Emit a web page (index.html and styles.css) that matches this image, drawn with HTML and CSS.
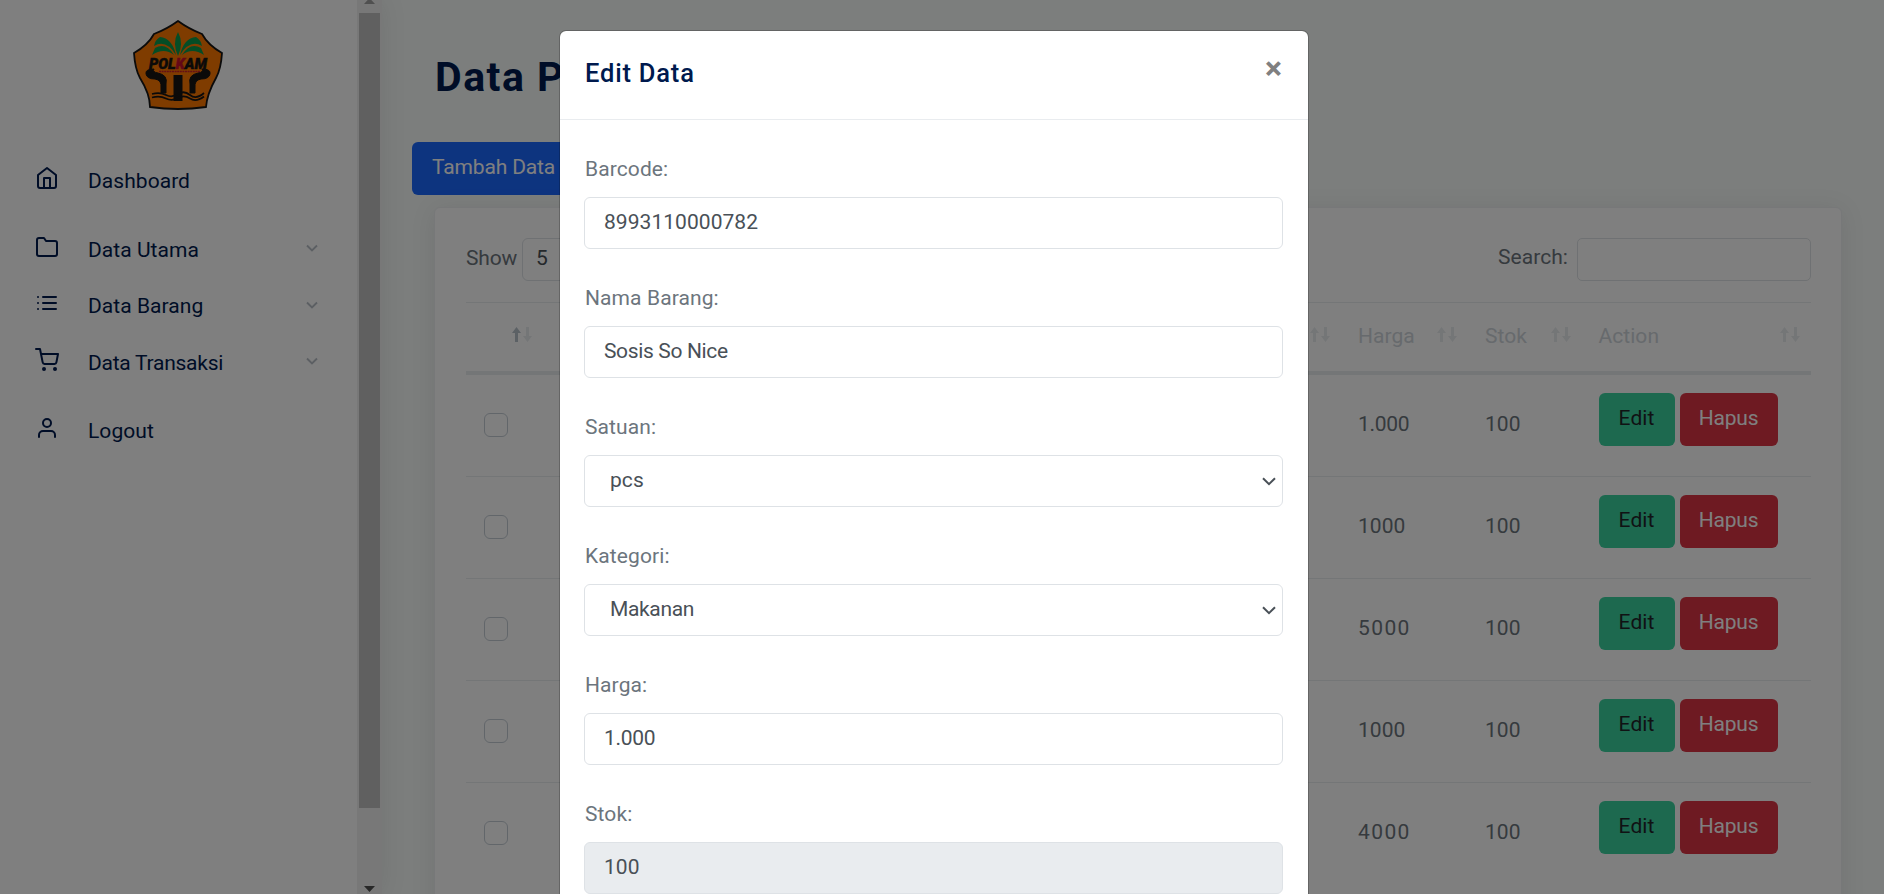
FILE: index.html
```html
<!DOCTYPE html>
<html lang="id">
<head>
<meta charset="utf-8">
<title>Data Produk</title>
<link rel="stylesheet" href="styles.css">
</head>
<body>
<svg class="defs" width="0" height="0">
  <symbol id="chev" viewBox="0 0 24 24"><polyline points="6 9 12 15 18 9"/></symbol>
  <symbol id="sort" viewBox="0 0 20 15">
    <path class="up" d="M4.500 0L9 6H6V15H3V6H0Z"/>
    <path class="down" fill="#e9ecef" d="M15.500 15L20 9H17V0H14V9H11Z"/>
  </symbol>
</svg>
<div class="app">
  <aside class="sidebar">
    <div class="side-main">
      <svg class="logo" viewBox="0 0 120 110">
        <path d="M58 11Q69 19 82 24Q88 35 102 43Q101 59 96 68Q87 84 86 97Q58 101 30 97Q30 84 20 68Q15 59 14 43Q28 35 34 24Q47 19 58 11Z" fill="#ff7800" stroke="#161616" stroke-width="1.800"/>
        <g fill="#0a9a4c">
          <path d="M58 22Q64 33 58 46Q52 33 58 22Z"/>
          <path d="M56 45Q52 28 40 27Q35 30 34 36Q46 29 56 45Z"/>
          <path d="M54 45Q46 32 35 38L32 45Q44 37 54 45Z"/>
          <path d="M60 45Q64 28 76 27Q81 30 82 36Q70 29 60 45Z"/>
          <path d="M62 45Q70 32 81 38L84 45Q72 37 62 45Z"/>
        </g>
        <path d="M34 59Q25 59 26 64Q27 69 35 69Q42 70 41 78V83H46V74Q48 65 38 63Q32 62 34 59Z" fill="#161412" stroke="#161412"/>
        <path d="M82 59Q91 59 90 64Q89 69 81 69Q74 70 75 78V83H70V74Q68 65 78 63Q84 62 82 59Z" fill="#161412" stroke="#161412"/>
        <path d="M53.500 65H62.500V91H53.500Z" fill="#161412"/>
        <path d="M32 84Q40 82 46 85T58 84T70 85T84 83M32 87.500Q40 85.500 46 88.500T58 88T70 88.500T84 86.500" fill="none" stroke="#161412" stroke-width="1.800"/>
        <text x="29" y="59" class="logo-text" textLength="58" lengthAdjust="spacingAndGlyphs">POL<tspan class="red">K</tspan>AM</text>
        <path d="M39 61.500H80" stroke="#c8202e" stroke-width="1.500" stroke-dasharray="2 .6"/>
      </svg>
      <nav class="nav">
        <a class="item"><svg class="ico" viewBox="0 0 24 24"><path d="M3 9l9-7 9 7v11a2 2 0 0 1-2 2H5a2 2 0 0 1-2-2z"/><polyline points="9 22 9 12 15 12 15 22"/></svg><span>Dashboard</span></a>
        <div class="group">
          <a class="item"><svg class="ico" viewBox="0 0 24 24"><path d="M22 19a2 2 0 0 1-2 2H4a2 2 0 0 1-2-2V5a2 2 0 0 1 2-2h5l2 3h9a2 2 0 0 1 2 2z"/></svg><span>Data Utama</span><svg class="chev"><use href="#chev"/></svg></a>
          <a class="item"><svg class="ico" viewBox="0 0 24 24"><path d="M8 6h13M8 12h13M8 18h13M3 6h.01M3 12h.01M3 18h.01"/></svg><span>Data Barang</span><svg class="chev"><use href="#chev"/></svg></a>
          <a class="item"><svg class="ico" viewBox="0 0 24 24"><circle cx="9" cy="21" r="1"/><circle cx="20" cy="21" r="1"/><path d="M1 1h4l2.680 13.390a2 2 0 0 0 2 1.610h9.720a2 2 0 0 0 2-1.610L23 6H6"/></svg><span class="tight">Data Transaksi</span><svg class="chev"><use href="#chev"/></svg></a>
        </div>
        <a class="item"><svg class="ico" viewBox="0 0 24 24"><path d="M20 21v-2a4 4 0 0 0-4-4H8a4 4 0 0 0-4 4v2"/><circle cx="12" cy="7" r="4"/></svg><span>Logout</span></a>
      </nav>
    </div>
    <div class="scrollbar">
      <svg class="arrow" viewBox="0 0 11 6"><path d="M0 6L5.500 0L11 6Z" fill="#a0a0a0"/></svg>
      <div class="thumb"></div>
      <svg class="arrow last" viewBox="0 0 11 6"><path d="M0 0L5.500 6L11 0Z" fill="#505050"/></svg>
    </div>
  </aside>
  <main class="main">
    <h1 class="heading">Data Produk</h1>
    <button class="btn primary">Tambah Data</button>
    <section class="card">
      <div class="tools">
        <div class="tool"><span class="show">Show</span><div class="length">5</div></div>
        <div class="tool"><span class="search">Search:</span><div class="search-box"></div></div>
      </div>
      <div class="table">
        <div class="row head">
          <div class="cell first"><svg class="sort asc"><use href="#sort"/></svg></div>
          <div class="cell"><svg class="sort"><use href="#sort"/></svg></div>
          <div class="cell"><span>Harga</span><svg class="sort"><use href="#sort"/></svg></div>
          <div class="cell"><span>Stok</span><svg class="sort"><use href="#sort"/></svg></div>
          <div class="cell"><span>Action</span><svg class="sort end"><use href="#sort"/></svg></div>
        </div>
        <div class="row"><div class="cell"><i class="check"></i></div><div class="cell"></div><div class="cell dotted">1.000</div><div class="cell">100</div><div class="cell acts"><button class="btn success">Edit</button><button class="btn danger">Hapus</button></div></div>
        <div class="row"><div class="cell"><i class="check"></i></div><div class="cell"></div><div class="cell">1000</div><div class="cell">100</div><div class="cell acts"><button class="btn success">Edit</button><button class="btn danger">Hapus</button></div></div>
        <div class="row"><div class="cell"><i class="check"></i></div><div class="cell"></div><div class="cell wide">5000</div><div class="cell">100</div><div class="cell acts"><button class="btn success">Edit</button><button class="btn danger">Hapus</button></div></div>
        <div class="row"><div class="cell"><i class="check"></i></div><div class="cell"></div><div class="cell">1000</div><div class="cell">100</div><div class="cell acts"><button class="btn success">Edit</button><button class="btn danger">Hapus</button></div></div>
        <div class="row"><div class="cell"><i class="check"></i></div><div class="cell"></div><div class="cell wide">4000</div><div class="cell">100</div><div class="cell acts"><button class="btn success">Edit</button><button class="btn danger">Hapus</button></div></div>
      </div>
    </section>
  </main>
</div>
<div class="backdrop">
  <div class="modal">
    <header class="modal-head"><h2 class="modal-title">Edit Data</h2><span class="close">×</span></header>
    <div class="modal-body">
      <div class="field"><label class="label">Barcode:</label><div class="input"><span>8993110000782</span></div></div>
      <div class="field"><label class="label">Nama Barang:</label><div class="input snug">Sosis So Nice</div></div>
      <div class="field"><label class="label">Satuan:</label><div class="input select"><span>pcs</span><svg class="caret" viewBox="0 0 14 9"><path d="M1 1.200L7 7.200L13 1.200"/></svg></div></div>
      <div class="field"><label class="label">Kategori:</label><div class="input select snug"><span>Makanan</span><svg class="caret" viewBox="0 0 14 9"><path d="M1 1.200L7 7.200L13 1.200"/></svg></div></div>
      <div class="field"><label class="label">Harga:</label><div class="input dotted">1.000</div></div>
      <div class="field"><label class="label">Stok:</label><div class="input disabled">100</div></div>
    </div>
  </div>
</div>
</body>
</html>
```
FILE: styles.css
```css
* { box-sizing: border-box; }
body {
  margin: 0;
  height: 894px;
  overflow: hidden;
  font: 400 21px/31px Roboto, "Open Sans", sans-serif;
  letter-spacing: .05px;
  color: #6c757d;
  background: #f8fcfa;
}
.defs { position: absolute; }
.app { display: flex; height: 894px; overflow: hidden; }

.sidebar { display: flex; width: 382px; flex: none; background: #fff; box-shadow: 0 0 24px rgba(60, 60, 60, .1); }
.side-main { width: 357px; padding-top: 10px; }
.logo { display: block; width: 120px; height: 110px; margin-left: 120px; }
.logo-text { font: italic 900 15px Roboto, sans-serif; fill: #161412; stroke: #161412; stroke-width: .5px; letter-spacing: 0; }
.red { fill: #c8102e; stroke: #c8102e; }
.nav { display: flex; flex-direction: column; gap: 12px; padding-top: 32px; color: #001a4e; }
.group { display: flex; flex-direction: column; }
.item { display: flex; align-items: center; height: 56.500px; padding: 0 38px 0 35px; }
.group .item { position: relative; top: .5px; }
.item span { flex: 1; margin-left: 29px; padding-top: 2px; }
.item .tight { letter-spacing: -.25px; }
.ico { width: 24px; height: 24px; margin-bottom: 5px; fill: none; stroke: currentColor; stroke-width: 2; stroke-linecap: round; stroke-linejoin: round; }
.chev { width: 20px; height: 20px; margin: 0 -3px 2px 0; fill: none; stroke: #b8bfc7; stroke-width: 2.300; }
.scrollbar { display: flex; flex-direction: column; align-items: center; width: 25px; padding-bottom: 2px; background: #f1f1f1; }
.arrow { width: 11px; height: 6px; margin-top: -2px; flex: none; }
.thumb { width: 21px; height: 795px; margin-top: 9px; flex: none; background: #c1c1c1; }
.arrow.last { margin-top: auto; }

.main { flex: 1; display: flex; flex-direction: column; align-items: flex-start; padding: 46px 42px 0 30px; }
.heading { flex: none; height: 60px; margin: 0 0 36px 23px; padding-top: 1px; font-size: 41px; line-height: 60px; font-weight: 700; color: #001a4e; letter-spacing: 1.5px; }
.btn { flex: none; height: 53px; padding: 0 20px 1px; border: 0; border-radius: 6px; font: inherit; letter-spacing: inherit; color: #fff; }
.primary { padding: 0 20px 2px; letter-spacing: -.15px; background: #1b68ff; }
.success { width: 76px; padding: 0 0 1px; background: #3ad29f; color: #212529; }
.danger { width: 98px; padding: 0 0 1px; background: #dc3545; letter-spacing: -.2px; }

.card { flex: none; width: 1408px; height: 760px; margin: 12px 0 0 22px; padding: 30px; border: 1px solid #eef0f2; border-radius: 6px; background: #fff; box-shadow: 0 3px 24px rgba(60, 50, 55, .1); }
.tools { display: flex; justify-content: space-between; height: 64px; padding-left: 1px; }
.tool { display: flex; }
.tool span { line-height: 39px; }
.show { margin-top: 1px; width: 56px; letter-spacing: -.2px; }
.length { width: 84px; height: 43px; padding: 4px 13px; border: 1px solid #dee2e6; border-radius: 6px; color: #495057; }
.search { width: 79px; }
.search-box { width: 234px; height: 43px; border: 1px solid #dee2e6; border-radius: 5px; }
.table { width: 1345px; margin-left: 1px; }
.row { display: grid; grid-template-columns: 94px 784px 127px 113.500px 1fr; height: 102px; border-top: 1px solid #e9ecef; }
.row.head { height: 73px; border-bottom: 4px solid #e9ecef; color: #ced4da; }
.row.head + .row { height: 101px; border-top: 0; }
.cell { display: flex; align-items: center; padding: 0 14px 2px 14px; }
.row.head .cell { justify-content: space-between; padding-bottom: 2px; }
.row .cell.first { padding-left: 46px; }
.sort { width: 20px; height: 15px; margin-bottom: 3px; fill: #e9ecef; flex: none; }
.row.head .cell:nth-child(2) { justify-content: flex-end; }
.sort.end { margin-right: -3px; }
.sort.asc { fill: #b9c2ca; }
.check { width: 24px; height: 24px; margin-left: 4px; border: 1px solid #c5cdd5; border-radius: 6px; }
.row .acts { gap: 5px; padding: 0 0 13px 14px; }
.dotted { letter-spacing: -.3px; }
.wide { letter-spacing: 1.4px; }

.backdrop { position: absolute; inset: 0; display: flex; justify-content: center; padding: 30px 16px 0 0; overflow: hidden; background: rgba(0, 0, 0, .5); }
.modal { width: 750px; height: 1000px; border: 1px solid rgba(0, 0, 0, .2); border-radius: 7px; background: #fff; background-clip: padding-box; }
.modal-head { display: flex; justify-content: space-between; height: 89px; padding: 25px 26px 0 25px; border-bottom: 1px solid #e9ecef; }
.modal-title { margin: 0; font-size: 25.500px; line-height: 35px; font-weight: 500; letter-spacing: .8px; color: #001a4e; }
.close { font-size: 32px; line-height: 25px; font-weight: 700; color: #808080; }
.modal-body { display: flex; flex-direction: column; gap: 33px; padding: 32px 25px 0 24px; }
.label { display: block; height: 31px; margin: 0 0 13px 1px; padding-top: 1px; letter-spacing: .1px; color: #6c757d; }
.field:first-child .label { height: 32px; padding-top: 2px; }
.input { display: flex; align-items: center; height: 52px; padding: 0 19px 1px; border: 1px solid #dee2e6; border-radius: 6px; color: #495057; }
.snug { letter-spacing: -.35px; }
.select { justify-content: space-between; padding: 0 6px 1px 25px; }
.caret { width: 14px; height: 9px; margin-top: 1px; fill: none; stroke: #495057; stroke-width: 2; }
.disabled { background: #e9ecef; }
```
